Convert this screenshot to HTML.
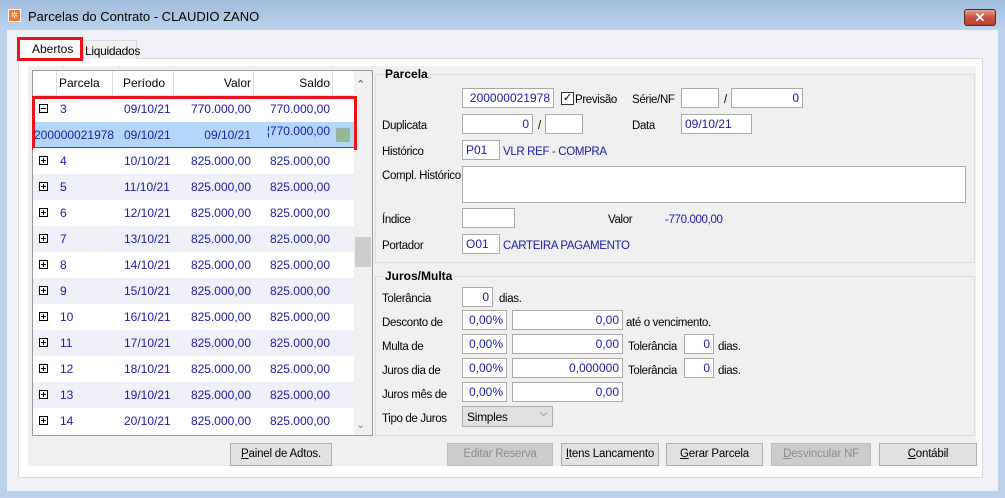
<!DOCTYPE html><html><head><style>
*{box-sizing:border-box;margin:0;padding:0}
body{width:1005px;height:498px;overflow:hidden;font-family:"Liberation Sans",sans-serif;font-size:11px;color:#000;background:#bcd2ea;position:relative}
.a{position:absolute}
.tb{left:0;top:0;width:1005px;height:30px;background:linear-gradient(#9fbcdb,#bcd3ec)}
.in{background:#fff;border:1px solid #a9a9a9;height:20px;color:#1a1aa6;padding:3px 3px;text-align:right;font-size:12px;line-height:13px}
.l{font-size:11.5px;letter-spacing:-.35px;margin-top:2px}
.btn{border:1px solid #adadad;background:#e1e1e1;height:23px;text-align:center;line-height:21px;font-size:11.5px;letter-spacing:-.2px}
.dis{color:#8d8d8d;background:#cccccc;border-color:#bfbfbf}
.row{left:33px;width:321px;height:26px;line-height:26px;color:#1a1aa6;font-size:12px}
.row span{position:absolute}
.pm{position:absolute;left:6px;top:8px;width:9px;height:9px;border:1px solid #000;background:#fff}
.pm:before{content:"";position:absolute;left:1px;top:3px;width:5px;height:1px;background:#000}
.pm.p:after{content:"";position:absolute;left:3px;top:1px;width:1px;height:5px;background:#000}
</style></head><body>
<div class="a tb"></div>
<div class="a" style="left:8px;top:9px;width:13px;height:13px;background:#f27a2a;border:1px solid #fff;color:#fff;font-size:9px;line-height:11px;text-align:center">✲</div>
<div class="a" style="left:28px;top:9px;font-size:13px;color:#000">Parcelas do Contrato - CLAUDIO ZANO</div>
<div class="a" style="left:964px;top:9px;width:32px;height:17px;border:1px solid #5a2626;border-radius:3px;background:linear-gradient(#e4a596,#c6503d 50%,#b7412f);color:#fff;font-weight:bold;text-align:center;font-size:13px;line-height:15px">✕</div>
<div class="a" style="left:7px;top:30px;width:991px;height:461px;background:#f1f2f7"></div>
<div class="a" style="left:18px;top:58px;width:965px;height:420px;background:#fff;border:1px solid #d9d9d9"></div>
<div class="a" style="left:28px;top:66px;width:948px;height:400px;background:#f0f0f0"></div>
<div class="a" style="left:83px;top:40px;width:54px;height:19px;background:#f0f0f0;border:1px solid #d9d9d9;border-bottom:none;font-size:12px;padding:3px 1px;letter-spacing:-.3px">Liquidados</div>
<div class="a" style="left:17px;top:37px;width:66px;height:24px;background:#fff;border:3px solid #e8131b;font-size:12px;padding:2px 0 0 12px">Abertos</div>
<!-- grid -->
<div class="a" style="left:32px;top:70px;width:341px;height:366px;background:#fff;border:1px solid #999"></div>
<div class="a" style="left:33px;top:71px;width:321px;height:25px;background:#fff;border-bottom:1px solid #ddd;font-size:12px;line-height:25px">
<span class="a" style="left:0;width:24px;height:25px;border-right:1px solid #ddd"></span>
<span class="a" style="left:26px">Parcela</span><span class="a" style="left:79px;height:25px;border-left:1px solid #ddd;padding-left:10px">Período</span>
<span class="a" style="left:140px;width:80px;height:25px;border-left:1px solid #ddd;text-align:right;padding-right:2px">Valor</span>
<span class="a" style="left:220px;width:79px;height:25px;border-left:1px solid #ddd;text-align:right;padding-right:2px">Saldo</span>
<span class="a" style="left:299px;width:22px;height:25px;border-left:1px solid #ddd"></span></div>
<div class="a" style="left:354px;top:71px;width:18px;height:364px;background:#f0f0f0"></div>
<div class="a" style="left:356px;top:78px;color:#555;font-size:11px">⌃</div>
<div class="a" style="left:356px;top:418px;color:#888;font-size:11px">⌄</div>
<div class="a" style="left:355px;top:237px;width:16px;height:30px;background:#cdcdcd"></div>
<div class="a row" style="top:96px;background:#fff"><i class="pm"></i><span style="left:27px">3</span><span style="left:91px">09/10/21</span><span style="left:140px;width:78px;text-align:right">770.000,00</span><span style="left:220px;width:77px;text-align:right">770.000,00</span></div>
<div class="a row" style="top:122px;background:#b3d7f9;width:321px"><span style="left:1px">200000021978</span><span style="left:91px">09/10/21</span><span style="left:140px;width:78px;text-align:right">09/10/21</span><span style="left:220px;width:77px;text-align:right;top:-4px">¦770.000,00</span><span style="left:303px;top:6px;width:14px;height:14px;background:#8fbc8f;border:1px solid #aaa"></span></div>
<div class="a" style="left:32px;top:96px;width:325px;height:54px;border:3px solid #e8131b"></div>
<div id="rows"></div>
<!-- Parcela group -->
<div class="a" style="left:375px;top:74px;width:600px;height:189px;border:1px solid #dcdcdc"></div>
<div class="a" style="left:383px;top:67px;background:#f0f0f0;padding:0 2px;font-weight:bold;font-size:12px">Parcela</div>
<div class="a in" style="left:462px;top:88px;width:92px">200000021978</div>
<div class="a" style="left:561px;top:92px;width:13px;height:13px;border:1px solid #333;background:#fff;font-size:11px;line-height:11px;text-align:center">✓</div>
<div class="a l" style="left:575px;top:92px">Previsão</div>
<div class="a l" style="left:632px;top:92px">Série/NF</div>
<div class="a in" style="left:681px;top:88px;width:38px"></div>
<div class="a l" style="left:724px;top:92px">/</div>
<div class="a in" style="left:731px;top:88px;width:72px">0</div>
<div class="a l" style="left:382px;top:118px">Duplicata</div>
<div class="a in" style="left:462px;top:114px;width:71px">0</div>
<div class="a l" style="left:538px;top:118px">/</div>
<div class="a in" style="left:545px;top:114px;width:38px"></div>
<div class="a l" style="left:632px;top:118px">Data</div>
<div class="a in" style="left:681px;top:114px;width:71px;text-align:left">09/10/21</div>
<div class="a l" style="left:382px;top:144px">Histórico</div>
<div class="a in" style="left:462px;top:140px;width:38px;text-align:left">P01</div>
<div class="a l" style="left:503px;top:144px;color:#1a1aa6">VLR REF - COMPRA</div>
<div class="a l" style="left:382px;top:168px">Compl. Histórico</div>
<div class="a in" style="left:462px;top:166px;width:504px;height:37px"></div>
<div class="a l" style="left:382px;top:212px">Índice</div>
<div class="a in" style="left:462px;top:208px;width:53px"></div>
<div class="a l" style="left:608px;top:212px">Valor</div>
<div class="a l" style="left:665px;top:212px;color:#1a1aa6">-770.000,00</div>
<div class="a l" style="left:382px;top:238px">Portador</div>
<div class="a in" style="left:462px;top:234px;width:38px;text-align:left">O01</div>
<div class="a l" style="left:503px;top:238px;color:#1a1aa6">CARTEIRA PAGAMENTO</div>
<!-- Juros -->
<div class="a" style="left:375px;top:276px;width:600px;height:160px;border:1px solid #dcdcdc"></div>
<div class="a" style="left:383px;top:269px;background:#f0f0f0;padding:0 2px;font-weight:bold;font-size:12px">Juros/Multa</div>
<div class="a l" style="left:382px;top:291px">Tolerância</div>
<div class="a in" style="left:462px;top:287px;width:31px">0</div>
<div class="a l" style="left:499px;top:291px">dias.</div>
<div id="jr"></div>
<div class="a l" style="left:382px;top:411px">Tipo de Juros</div>
<div class="a" style="left:462px;top:406px;width:91px;height:21px;border:1px solid #adadad;background:#e1e1e1;font-size:12px;padding:3px 4px;letter-spacing:-.3px">Simples<span style="position:absolute;right:5px;top:1px;font-size:10px;color:#555">⌵</span></div>
<!-- buttons -->
<div class="a btn" style="left:230px;top:443px;width:102px"><u>P</u>ainel de Adtos.</div>
<div class="a btn dis" style="left:447px;top:443px;width:106px">Editar Reserva</div>
<div class="a btn" style="left:561px;top:443px;width:98px"><u>I</u>tens Lancamento</div>
<div class="a btn" style="left:666px;top:443px;width:97px"><u>G</u>erar Parcela</div>
<div class="a btn dis" style="left:771px;top:443px;width:100px"><u>D</u>esvincular NF</div>
<div class="a btn" style="left:879px;top:443px;width:98px"><u>C</u>ontábil</div>
<script>
var h='';for(var i=4;i<=14;i++){var y=148+(i-4)*26;var bg=(i%2)?'#f0f0f8':'#fff';h+='<div class="a row" style="top:'+y+'px;background:'+bg+'"><i class="pm p"></i><span style="left:27px">'+i+'</span><span style="left:91px">'+(i+6)+'/10/21</span><span style="left:140px;width:78px;text-align:right">825.000,00</span><span style="left:220px;width:77px;text-align:right">825.000,00</span></div>';}
document.getElementById('rows').outerHTML=h;
var L=[['Desconto de','0,00',' até o vencimento.'],['Multa de','0,00','T'],['Juros dia de','0,000000','T'],['Juros mês de','0,00','']];var j='';
L.forEach(function(r,k){var y=310+k*24;j+='<div class="a l" style="left:382px;top:'+(y+5)+'px">'+r[0]+'</div><div class="a in" style="left:462px;top:'+y+'px;width:45px">0,00%</div><div class="a in" style="left:512px;top:'+y+'px;width:111px">'+r[1]+'</div>';
if(r[2]=='T'){j+='<div class="a l" style="left:628px;top:'+(y+5)+'px">Tolerância</div><div class="a in" style="left:684px;top:'+y+'px;width:30px">0</div><div class="a l" style="left:718px;top:'+(y+5)+'px">dias.</div>';}else if(r[2]){j+='<div class="a l" style="left:626px;top:'+(y+5)+'px">'+r[2]+'</div>';}});
document.getElementById('jr').outerHTML=j;
</script>
</body></html>
